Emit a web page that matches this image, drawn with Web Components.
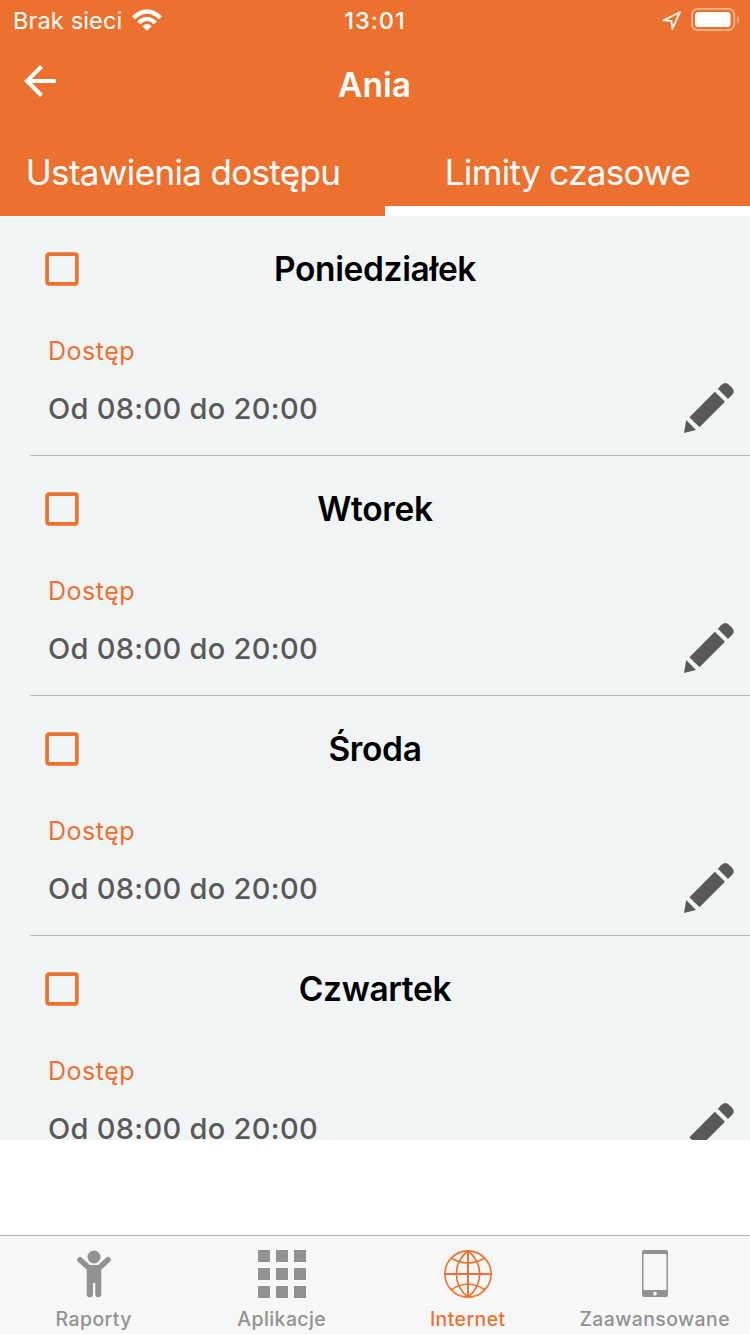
<!DOCTYPE html>
<html lang="pl">
<head>
<meta charset="utf-8">
<title>Ania</title>
<style>
html,body{margin:0;padding:0}
body{width:750px;height:1334px;overflow:hidden;background:#fff;font-family:Inter,"Liberation Sans",sans-serif}
</style>
</head>
<body>
<time-limits-app></time-limits-app>
<script>
function define(name, html) {
  const template = document.createElement('template');
  template.innerHTML = html;
  customElements.define(name, class extends HTMLElement {
    constructor() {
      super();
      this.attachShadow({mode: 'open'}).appendChild(template.content.cloneNode(true));
    }
  });
}

define('status-bar', `
<style>
:host{display:grid;grid-template-columns:1fr auto 1fr;align-items:center;height:42px;color:#fff;font-size:23.5px;line-height:42px;white-space:nowrap}
.left{display:flex;align-items:center;padding-left:13px}
.net{letter-spacing:.15px;font-weight:400;width:110px}
.wifi{margin-left:9px;margin-top:-2px}
.time{font-weight:500;letter-spacing:.95px}
.right{display:flex;align-items:center;justify-content:flex-end;padding-right:11px}
.right svg{margin-top:-2px}
svg{display:block}
</style>
<div class="left"><span class="net">Brak sieci</span>
<svg class="wifi" width="30" height="22" viewBox="0 0 30 22" fill="#fff"><path d="M0 7.3Q15-6.700 30 7.3L27 10.3Q15-1 3 10.3Z"/><path d="M5.2 12.4Q15 3.2 24.800 12.4L21.800 15.2Q15 9 8.2 15.2Z"/><path d="M10.3 17.2Q15 12.8 19.7 17.2L15 21.800Z"/></svg></div>
<span class="time">13:01</span>
<div class="right">
<svg width="78" height="24" viewBox="0 0 78 24"><path d="M2.5 12.3L19 4.2L11.3 20.8L10.4 12.9Z" fill="none" stroke="#fff" stroke-width="1.8" stroke-linejoin="round"/><rect x="30.9" y=".9" width="42.4" height="21.2" rx="6" fill="none" stroke="#f6b78f" stroke-width="1.8"/><rect x="34" y="4" width="35.5" height="15" rx="3.5" fill="#fff"/><path d="M76 7.8Q78 9 78 11.5T76 15.2Z" fill="#f6b78f"/></svg>
</div>`);

define('title-bar', `
<style>
:host{display:grid;grid-template-columns:80px 1fr 80px;height:88px;color:#fff}
svg{display:block;margin:23px 0 0 24px}
h1{margin:0;font-size:33.5px;font-weight:600;line-height:86px;text-align:center;letter-spacing:0;padding-right:1px}
</style>
<svg width="33" height="33" viewBox="0 0 33 33"><path d="M32 16H3M17.5 1.5L3 16L17.5 30.5" fill="none" stroke="#fff" stroke-width="4"/></svg>
<h1><slot></slot></h1>`);

define('tab-item', `
<style>
:host{display:block;box-sizing:border-box;height:86px;border-bottom:10px solid transparent;color:#fff;font-size:35px;font-weight:400;line-height:85px;text-align:center;white-space:nowrap;letter-spacing:-.66px}
:host([selected]){border-bottom-color:#fff}
</style><slot></slot>`);

define('tab-strip', `
<style>:host{display:grid;grid-template-columns:385px 365px}
::slotted(tab-item:first-child){padding-right:19px}</style><slot></slot>`);

define('day-row', `
<style>
:host{display:flex;flex-direction:column;height:240px;margin-left:30px}
.head{display:grid;grid-template-columns:64px 1fr 94px;height:106px;align-items:center}
.box{display:block;width:34px;height:34px;margin-left:15px}
h2{margin:0;font-size:33.5px;font-weight:600;line-height:106px;text-align:center;color:#000;letter-spacing:-.35px}
.body{display:grid;grid-template-columns:1fr auto;height:133px;border-bottom:1px solid #b6b9ba}
.text{padding:2px 0 0 18px}
.label{font-size:25px;line-height:54px;color:#ec712e;letter-spacing:.5px}
.time{font-size:29px;font-weight:500;line-height:61px;color:#595959;letter-spacing:.3px}
.pen{display:block;margin:60px 15px 0 0}
</style>
<div class="head"><svg class="box" viewBox="0 0 34 34"><rect x="2.1" y="2.1" width="29.8" height="29.8" rx="1.8" fill="none" stroke="#ec712e" stroke-width="3.6"/></svg><h2><slot></slot></h2></div>
<div class="body"><div class="text"><div class="label">Dostęp</div><div class="time">Od 08:00 do 20:00</div></div>
<svg class="pen" width="52" height="52" viewBox="0 0 52 52" fill="#595959"><path d="M1 51L3.2 38L13 48Z"/><path d="M6.4 35.2L31.8 9.7L42 19.8L16.5 45.2Z"/><path d="M34.8 6.8L38.7 2.8Q42.3-.7 46 2.7L49 5.8Q52.5 9.6 49 13L45 17Z"/></svg></div>`);

define('nav-item', `
<style>
:host{display:flex;flex-direction:column;align-items:center;color:#929292;font-size:19.4px;font-weight:500;line-height:26px;letter-spacing:.45px;white-space:nowrap}
:host([selected]){color:#ec712e}
.icon{display:block;height:50px;margin-top:13px}
.label{margin-top:7px}
</style><div class="icon"><slot name="icon"></slot></div><div class="label"><slot></slot></div>`);

define('bottom-nav', `
<style>:host{display:grid;grid-template-columns:187.5px 188.500px 183.500px 190.500px;box-sizing:border-box;height:99px;border-top:1px solid #b1b1b1;background:#f7f7f7}
svg{display:block}</style>
<nav-item><svg slot="icon" width="36" height="50" viewBox="0 0 36 50" fill="#929292"><circle cx="18" cy="8" r="6.5"/><path d="M4 10.7L13 19M32 10.7L23 19" stroke="#929292" stroke-width="5.6" stroke-linecap="round"/><path d="M10.7 16H25.3V45.2A2.9 2.9 0 0 1 19.3 45.2V34H17V45.2A2.9 2.9 0 0 1 10.7 45.2Z"/></svg>Raporty</nav-item>
<nav-item><svg slot="icon" width="48" height="50" viewBox="0 0 48 50" fill="#929292"><path d="M0 1h12v12H0zM18 1h12v12H18zM36 1h12v12H36zM0 19h12v12H0zM18 19h12v12H18zM36 19h12v12H36zM0 37h12v12H0zM18 37h12v12H18zM36 37h12v12H36z"/></svg>Aplikacje</nav-item>
<nav-item selected><svg slot="icon" width="48" height="50" viewBox="0 0 48 50" fill="none" stroke="#ec712e" stroke-width="1.6"><circle cx="24" cy="25" r="23.1"/><path d="M0 25H48M24 1V49" stroke-width="2"/><path d="M24 2C8.5 14 8.5 36 24 48M24 2C39.500 14 39.500 36 24 48M7 9Q24 19 41 9M7 41Q24 29 41 41"/></svg>Internet</nav-item>
<nav-item><svg slot="icon" width="26" height="50" viewBox="0 0 26 50"><path fill="#929292" fill-rule="evenodd" d="M2 1H24Q26 1 26 3V46Q26 48 24 48H2Q0 48 0 46V3Q0 1 2 1ZM1.500 5V41H24.500V5ZM13 42.800A1.900 1.900 0 1 0 13 46.600A1.900 1.900 0 1 0 13 42.800Z"/></svg>Zaawansowane</nav-item>`);

define('time-limits-app', `
<style>
:host{display:flex;flex-direction:column;width:750px;height:1334px}
header{background:#ec712e;height:216px;flex:none}
main{height:924px;flex:none;overflow:hidden;background:#f0f4f5}
bottom-nav{margin-top:auto}
</style>
<header><status-bar></status-bar><title-bar>Ania</title-bar>
<tab-strip><tab-item>Ustawienia dostępu</tab-item><tab-item selected>Limity czasowe</tab-item></tab-strip></header>
<main><day-row>Poniedziałek</day-row><day-row>Wtorek</day-row><day-row>Środa</day-row><day-row>Czwartek</day-row></main>
<bottom-nav></bottom-nav>`);
</script>
</body>
</html>
